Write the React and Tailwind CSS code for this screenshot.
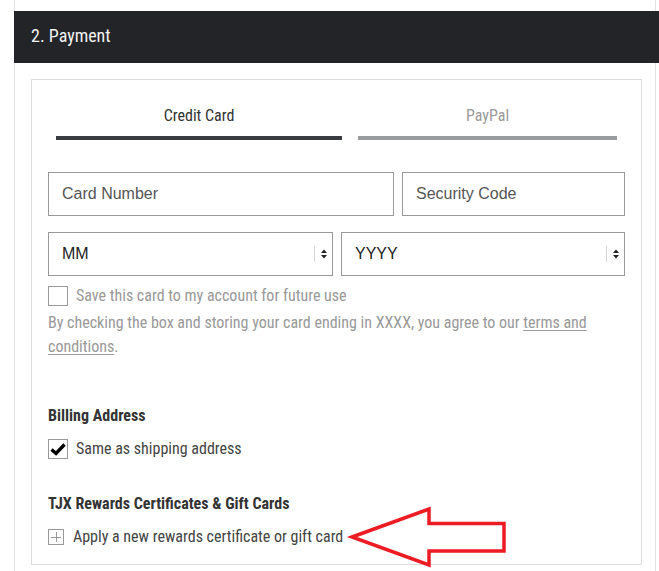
const cond = "font-['Roboto_Condensed',_'Roboto',_sans-serif]";
const arial = "font-['Liberation_Sans',_Arial,_sans-serif]";

function SelectBox({ label, className }) {
  return (
    <div className={`relative flex h-[44px] items-center border border-[#999] pl-[13px] ${className}`}>
      <span className={`${arial} text-[16px] text-[#222]`}>{label}</span>
      <div className="ml-auto mr-[4px] flex items-center">
        <div className="h-[16px] w-px bg-[#d6d6d6]" />
        <svg width="8" height="12" viewBox="0 0 8 12" className="ml-[5px]">
          <path d="M1 5 L4 1.5 L7 5 Z" fill="#222" />
          <path d="M1 7 L4 10.5 L7 7 Z" fill="#222" />
        </svg>
      </div>
    </div>
  );
}

export default function App() {
  return (
    <div className="relative min-h-[571px] w-[659px] overflow-hidden bg-white">
      <div className="ml-[14px] min-h-[571px] w-[642px] border-x border-[#e3e3e3] pt-[11px]">
        <div className="-ml-px -mr-[6px] flex h-[52px] items-center bg-[#232427] pb-[4px] pl-[17px]">
          <span className={`${cond} text-[18px] text-[#f2f2f2]`}>2. Payment</span>
        </div>
        <div className={`${cond} ml-[16px] mt-[16px] w-[611px] border border-[#dcdcdc] px-[16px] pb-[15px] pt-[24px]`}>
          <div className="flex gap-[16px] px-[8px]">
            <div className="w-[286px]">
              <div className="h-[24px] text-center text-[16px] leading-[24px] text-[#333]">Credit Card</div>
              <div className="mt-[8px] h-[4px] bg-[#3a3b40]" />
            </div>
            <div className="w-[259px]">
              <div className="h-[24px] text-center text-[16px] leading-[24px] text-[#999]">PayPal</div>
              <div className="mt-[8px] h-[4px] bg-[#999b9e]" />
            </div>
          </div>

          <div className="mt-[32px] flex gap-[8px]">
            <div className="flex h-[44px] w-[346px] items-center border border-[#999] pl-[13px]">
              <span className={`${arial} text-[16px] text-[#555]`}>Card Number</span>
            </div>
            <div className="flex h-[44px] w-[223px] items-center border border-[#999] pl-[13px]">
              <span className={`${arial} text-[16px] text-[#555]`}>Security Code</span>
            </div>
          </div>

          <div className="mt-[16px] flex gap-[8px]">
            <SelectBox label="MM" className="w-[285px]" />
            <SelectBox label="YYYY" className="w-[284px]" />
          </div>

          <div className="mt-[8px] flex h-[24px] items-center">
            <div className="h-[20px] w-[20px] border border-[#999] bg-white" />
            <span className="ml-[8px] text-[16px] leading-[24px] text-[#999]">Save this card to my account for future use</span>
          </div>
          <p className="mt-[3px] w-[560px] text-[16px] leading-[24px] text-[#999]">
            By checking the box and storing your card ending in XXXX, you agree to our{" "}
            <span className="underline underline-offset-2">terms and conditions</span>.
          </p>

          <div className="mt-[45px] text-[16px] font-bold leading-[24px] text-[#333]">Billing Address</div>
          <div className="mt-[9px] flex h-[24px] items-center">
            <div className="flex h-[20px] w-[20px] items-center justify-center border border-[#999] bg-white">
              <svg width="16" height="14" viewBox="0 0 16 14">
                <path d="M1.5 7.5 L6 11.5 L14.5 2.5" fill="none" stroke="#000" strokeWidth="3.4" strokeLinejoin="miter" />
              </svg>
            </div>
            <span className="ml-[8px] text-[16px] leading-[24px] text-[#444]">Same as shipping address</span>
          </div>

          <div className="mt-[31px] text-[16px] font-bold leading-[24px] text-[#333]">TJX Rewards Certificates &amp; Gift Cards</div>
          <div className="mt-[9px] flex h-[24px] items-center">
            <div className="relative h-[16px] w-[16px] border border-[#999]">
              <div className="absolute left-[2px] top-[6.5px] h-px w-[10px] bg-[#999]" />
              <div className="absolute left-[6.5px] top-[2px] h-[10px] w-px bg-[#999]" />
            </div>
            <span className="ml-[9px] text-[16px] leading-[24px] text-[#444]">Apply a new rewards certificate or gift card</span>
          </div>
        </div>
      </div>

      <svg className="pointer-events-none absolute left-0 top-0" width="659" height="571" viewBox="0 0 659 571">
        <polygon
          points="352,537 429,509 429,523.5 504,523.5 504,551 429,551 429,565"
          fill="none"
          stroke="#ed1c24"
          strokeWidth="3.5"
          strokeLinejoin="miter"
        />
      </svg>
    </div>
  );
}
